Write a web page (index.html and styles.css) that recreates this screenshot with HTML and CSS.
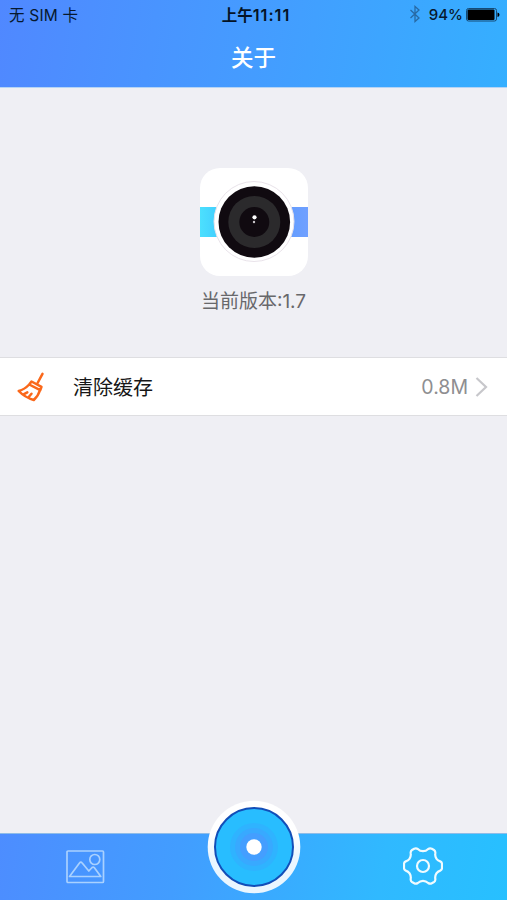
FILE: index.html
```
<!DOCTYPE html>
<html lang="zh-CN">
<head>
<meta charset="utf-8">
<title>关于</title>
<link rel="stylesheet" href="styles.css">
</head>
<body>
<div class="screen">
  <header class="header">
    <div class="status">
      <span class="carrier">无 SIM 卡</span>
      <span class="time">上午<span class="clock">11:11</span></span>
      <div class="power">
        <svg class="bluetooth" width="12" height="18" viewBox="0 0 12 18"><path d="M1.5 5 10 13 6 16.5V1.5L10 5 1.5 13"/></svg>
        <span class="percent">94%</span>
        <svg class="battery" width="34" height="14" viewBox="0 0 34 14"><rect class="shell" x=".5" y=".5" width="30" height="12.5" rx="2"/><rect x="1.5" y="1.5" width="27" height="10.5" rx="1"/><path d="M31.5 4.5q2 .5 2 2.2t-2 2.2z"/></svg>
      </div>
    </div>
    <h1 class="title">关于</h1>
  </header>
  <main class="content">
    <section class="about">
      <svg class="app-icon" width="108" height="108" viewBox="0 0 108 108">
        <defs>
          <linearGradient id="band"><stop offset="0" stop-color="#4ce0fe"/><stop offset=".16" stop-color="#43cffe"/><stop offset=".84" stop-color="#649dff"/><stop offset="1" stop-color="#70a0ff"/></linearGradient>
        </defs>
        <rect width="108" height="108" rx="20" fill="#fff"/>
        <path d="M0 39h108v30H0z" fill="url(#band)"/>
        <circle cx="54" cy="53.5" r="40" fill="#fff" stroke="#e9e3ea"/>
        <circle cx="54.3" cy="54" r="35.8" fill="#100a10"/>
        <circle cx="54.3" cy="54" r="26" fill="#2b2a2c"/>
        <circle cx="54.3" cy="54" r="15" fill="#100a10"/>
        <circle cx="54.5" cy="49.3" r="2.1" fill="#fff"/>
        <circle cx="54" cy="54" r="1.2" fill="#c9c6ca"/>
      </svg>
      <p class="version">当前版本:1.7</p>
    </section>
    <div class="row">
      <svg class="broom" width="30" height="30" viewBox="0 0 30 30">
        <path d="M25.5 1.8 20.6 11"/>
        <path d="M14.5 9.5 24.5 14.8 23.2 18.2 12.2 12.5zM12.2 12.5Q7.5 17.5 1.7 19 8 25.500 16.8 28 21.500 23.500 22.900 18.200M7 22.200l3.300-1.800M11.500 25.200l3-3.500"/>
      </svg>
      <span class="label">清除缓存</span>
      <span class="value">0.8M</span>
      <svg class="chevron" width="13" height="22" viewBox="0 0 13 22"><path d="m1.500 2 9.500 9-9.500 9"/></svg>
    </div>
  </main>
  <nav class="tabs">
    <svg class="picture" width="40" height="34" viewBox="0 0 40 34"><rect x="2" y="1" width="36.5" height="31.5" rx="1"/><circle cx="29.8" cy="9.5" r="5"/><path d="M4.5 26.5 14.500 13q1.300-1.800 2.700 0l6.600 8 3.300-3.500q1.200-1 2.300.2l6.400 8.800z"/></svg>
    <svg class="shutter" width="94" height="94" viewBox="0 0 94 94">
      <defs><linearGradient id="rim" x2="0" y2="1"><stop offset=".35" stop-color="#fff"/><stop offset=".6" stop-color="#eaf6ff"/></linearGradient></defs>
      <circle cx="47" cy="47" r="46.3" fill="url(#rim)"/>
      <circle cx="47" cy="47" r="39" fill="#28bdff" stroke="#124eb8" stroke-width="2"/>
      <circle cx="47" cy="47" r="24" fill="#2fb3ff"/>
      <circle cx="47" cy="47" r="19" fill="#38a9ff"/>
      <circle cx="47" cy="47" r="14" fill="#449eff"/>
      <circle cx="47" cy="47" r="7.7" fill="#fff"/>
    </svg>
    <svg class="gear" width="40" height="38" viewBox="0 0 40 38"><circle cx="20" cy="19" r="6"/><path d="M11.2 1.8Q13 .8 14.8 2q2.2 2.2 5.2 2.2T25.2 2q1.8-1.2 3.6-.2l2.2 1.2q1.6 1 1.3 3.2-.5 2.8 1.1 5.400 1.400 2.100 3.800 2.800 1.800.7 1.800 2.600v4q0 1.900-1.800 2.600-2.400.7-3.800 2.800-1.600 2.600-1.100 5.400.3 2.200-1.300 3.200l-2.200 1.200q-1.800 1-3.600-.2-2.200-2.200-5.200-2.200T14.800 36q-1.800 1.200-3.600.2L9 35q-1.600-1-1.300-3.200.5-2.800-1.100-5.400-1.400-2.100-3.800-2.800Q1 22.900 1 21v-4q0-1.900 1.800-2.600 2.400-.7 3.800-2.800Q8.200 9 7.700 6.200 7.400 4 9 3z"/></svg>
  </nav>
</div>
</body>
</html>
```
FILE: styles.css
```
* { box-sizing: border-box; }
body { margin: 0; font-family: Inter, "Noto Sans CJK SC", sans-serif; }
svg { display: block; flex: none; }
.screen { width: 507px; height: 900px; display: flex; flex-direction: column; background: #efeff4; overflow: hidden; }
.header { height: 88px; background: linear-gradient(100deg, #5088ff, #459bff 48%, #35afff); border-bottom: 1px solid #b5d4f5; }
.status { height: 30px; display: grid; grid-template-columns: 1fr auto 1fr; align-items: center; padding: 0 7px 2px 9px; font-size: 15.5px; color: #07192e; white-space: nowrap; }
.carrier { letter-spacing: .2px; }
.time { margin-left: 3px; font-weight: 600; font-size: 15.5px; color: #041326; }
.clock { font-size: 16.2px; letter-spacing: 1px; }
.power { display: flex; align-items: center; justify-content: flex-end; }
.bluetooth { fill: none; stroke: #286aa5; stroke-width: 1.3; margin-right: 8px; }
.percent { margin-right: 3px; font-weight: 500; font-size: 15px; }
.battery { fill: #000; margin-top: 2px; }
.shell { fill: none; stroke: #164a75; }
.title { margin: 0; height: 56px; font-size: 22.5px; line-height: 56px; font-weight: 500; color: #fff; text-align: center; }
.content { flex: 1; }
.about { height: 269px; padding-top: 80px; display: flex; flex-direction: column; align-items: center; }
.app-icon { margin-left: 1px; }
.version { margin: 12px 0 0; font-size: 19px; line-height: 28px; color: #68686b; }
.row { height: 59px; background: #fff; border: solid #dedee1; border-width: 1px 0; display: flex; align-items: center; padding: 0 19px 0 17px; }
.broom { fill: none; stroke: #fa681b; stroke-width: 2.5; stroke-linecap: round; stroke-linejoin: round; }
.label { margin-left: 26px; font-size: 20px; color: #171717; }
.value { margin-left: auto; font-size: 19.5px; color: #8e8e91; }
.chevron { margin-left: 7px; fill: none; stroke: #c7c7cb; stroke-width: 2.2; }
.tabs { height: 67px; background: linear-gradient(100deg, #4d8dff, #429dff 35%, #30b9ff 75%, #27c0ff); border-top: 1px solid #8ebce8; display: flex; align-items: center; justify-content: space-between; padding: 0 64px 0 65px; }
.picture { fill: none; stroke: #a9d1ff; stroke-width: 1.7; stroke-linejoin: round; }
.shutter { margin-top: -40px; margin-right: 1px; }
.gear { margin-top: -2px; fill: none; stroke: #f0fbff; stroke-width: 2.2; stroke-linejoin: round; }
```
